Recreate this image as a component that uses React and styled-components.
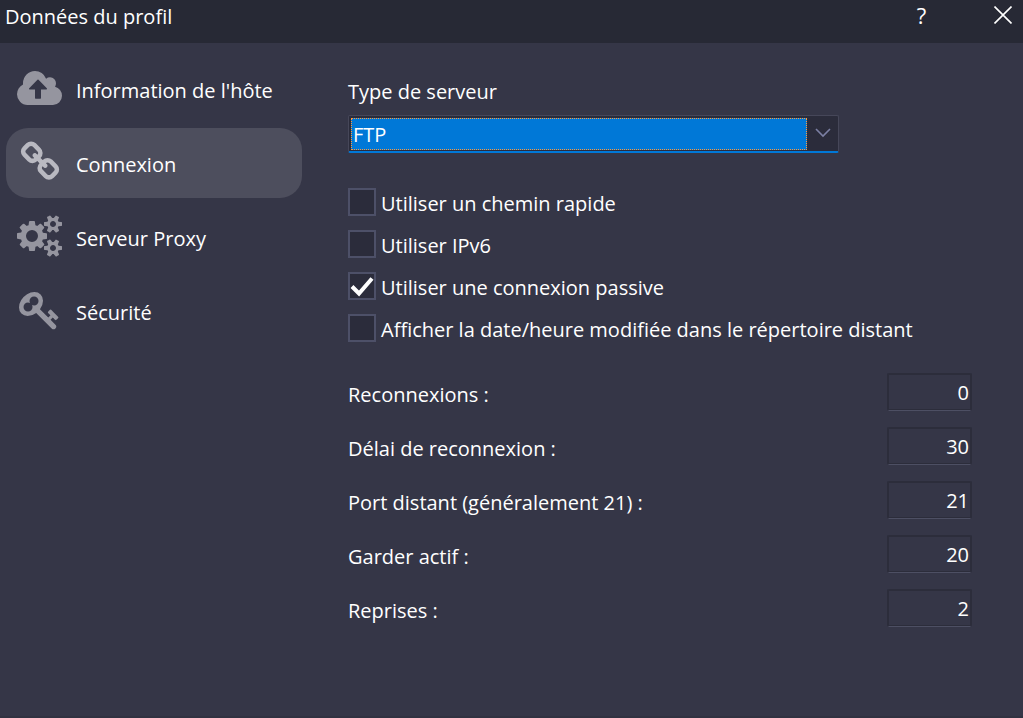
import React, { useState } from 'react';
import styled, { createGlobalStyle } from 'styled-components';

const GlobalStyle = createGlobalStyle`
  * {
    box-sizing: border-box;
  }

  body {
    margin: 0;
    background: #353647;
  }

  body, button, input, select {
    font-family: "Open Sans", "Noto Sans", sans-serif;
    font-size: 20px;
    line-height: 28px;
    color: #ffffff;
  }
`;

const Window = styled.div`
  min-height: 100vh;
  display: flex;
  flex-direction: column;
  background: #353647;
  border-bottom: 2px solid #313241;
`;

const TitleBar = styled.header`
  display: flex;
  justify-content: space-between;
  align-items: flex-start;
  height: 43px;
  padding-left: 5px;
  background: #272935;
`;

const Title = styled.h1`
  margin: 0;
  padding-top: 3px;
  font-size: 20px;
  font-weight: 400;
`;

const TitleButtons = styled.div`
  display: flex;
  gap: 40px;
`;

const TitleButton = styled.button`
  display: flex;
  justify-content: center;
  align-items: center;
  width: 41px;
  height: 29px;
  padding: 0;
  border: 0;
  background: none;
  font-size: 22px;
  font-weight: 500;
`;

const Body = styled.div`
  flex: 1;
  display: flex;
  gap: 46px;
  padding: 11px 51px 20px 6px;
`;

const Nav = styled.nav`
  flex: 0 0 296px;
  display: flex;
  flex-direction: column;
  gap: 4px;
`;

const NavItem = styled.a`
  display: flex;
  align-items: center;
  gap: 14px;
  height: 70px;
  padding-left: 11px;
  padding-bottom: 2px;
  border-radius: 22px;
  background: ${props => props.$active ? "#4d4e5d" : "none"};
  color: #ffffff;
  text-decoration: none;

  svg {
    fill: ${props => props.$active ? "#b9b9c1" : "#95959f"};
  }
`;

const NavIcon = styled.span`
  display: flex;
  width: 45px;
  height: 42px;
  align-items: center;
`;

const NavText = styled.span`
  padding-top: 5px;
`;

const Main = styled.main`
  flex: 1;
  display: flex;
  flex-direction: column;
  padding-top: 24px;
`;

const FieldLabel = styled.label`
  margin-bottom: 9px;
`;

const SelectFrame = styled.div`
  display: flex;
  max-width: 491px;
  height: 38px;
  padding: 2px 0 1px 2px;
  border: 1px solid #464759;
  border-bottom: 2px solid #0078d7;
  border-radius: 2px;
  background: #2b2c3b;
`;

const Select = styled.select`
  flex: 1;
  appearance: none;
  padding: 2px 1px 0;
  border: 1px dotted #ff9a3c;
  border-radius: 0;
  outline: none;
  background: #0078d7;
  line-height: 28px;
`;

const SelectArrow = styled.svg`
  width: 31px;
  height: 30px;
  fill: none;
  stroke: #7c80a4;
  stroke-width: 1.6;
`;

const CheckList = styled.div`
  display: flex;
  flex-direction: column;
  gap: 14px;
  margin-top: 35px;
`;

const CheckRow = styled.label`
  display: flex;
  gap: 5px;
  height: 28px;
`;

const CheckMark = styled.span`
  display: grid;
  width: 28px;
  height: 28px;

  > * {
    grid-area: 1 / 1;
  }
`;

const CheckInput = styled.input`
  appearance: none;
  width: 28px;
  height: 28px;
  margin: 0;
  border: 2px solid #4d5068;
  background: #2b2c3b;

  & + svg {
    visibility: hidden;
  }

  &:checked + svg {
    visibility: visible;
  }
`;

const CheckText = styled.span`
  padding-top: 2px;
`;

const NumberList = styled.div`
  display: flex;
  flex-direction: column;
  gap: 16px;
  margin-top: 31px;
`;

const NumberRow = styled.div`
  display: flex;
  justify-content: space-between;
  align-items: center;
  height: 38px;
`;

const NumberLabel = styled.label`
  padding-top: 5px;
`;

const NumberInput = styled.input`
  width: 85px;
  height: 38px;
  padding: 0 1px;
  border: 2px solid #2c2d3b;
  border-bottom: 1px solid #4d4f63;
  border-radius: 2px;
  outline: none;
  background: #353647;
  box-shadow: inset 0 -1px #2c2d3b;
  text-align: right;
`;

const CloudIcon = () => (
  <svg width="45" height="34" viewBox="0 128 1920 1408" preserveAspectRatio="none">
    <path d="M1280 864q0-14-9-23l-352-352q-9-9-23-9t-23 9l-351 351q-10 12-10 24 0 14 9 23t23 9h224v352q0 13 9.500 22.500t22.500 9.500h192q13 0 22.500-9.500t9.500-22.500v-352h224q13 0 22.500-9.500t9.500-22.500zm640 288q0 159-112.500 271.500t-271.500 112.500h-1088q-185 0-316.500-131.500t-131.500-316.500q0-130 70-240t188-165q-2-30-2-43 0-212 150-362t362-150q156 0 285.500 87t188.500 231q71-62 166-62 106 0 181 75t75 181q0 76-41 138 130 31 213.500 135.500t83.500 238.500z" />
  </svg>
);

const LinkIcon = () => (
  <svg width="45" height="42" viewBox="-86 0 1920 1792">
    <path d="M1520 1216q0-40-28-68l-208-208q-28-28-68-28-42 0-72 32 3 3 19 18.500t21.500 21.500 15 19 13 25.500 3.500 27.500q0 40-28 68t-68 28q-15 0-27.500-3.500t-25.500-13-19-15-21.500-21.500-18.500-19q-33 31-33 73 0 40 28 68l206 207q27 27 68 27 40 0 68-26l147-146q28-28 28-67zm-703-705q0-40-28-68l-206-207q-28-28-68-28-39 0-68 27l-147 146q-28 28-28 67 0 40 28 68l208 208q27 27 68 27 42 0 72-31-3-3-19-18.500t-21.500-21.500-15-19-13-25.500-3.500-27.500q0-40 28-68t68-28q15 0 27.500 3.500t25.500 13 19 15 21.500 21.500 18.500 19q33-31 33-73zm895 705q0 120-85 203l-147 146q-83 83-203 83-121 0-204-85l-206-207q-83-83-83-203 0-123 88-209l-88-88q-86 88-208 88-120 0-204-84l-208-208q-84-84-84-204t85-203l147-146q83-83 203-83 121 0 204 85l206 207q83 83 83 203 0 123-88 209l88 88q86-88 208-88 120 0 204 84l208 208q84 84 84 204z" />
  </svg>
);

const GearsIcon = () => (
  <svg width="45" height="42" viewBox="0 0 1920 1792">
    <path d="M896 896q0-106-75-181t-181-75-181 75-75 181 75 181 181 75 181-75 75-181zm768 512q0-52-38-90t-90-38-90 38-38 90q0 53 37.500 90.500t90.500 37.500 90.500-37.500 37.500-90.500zm0-1024q0-52-38-90t-90-38-90 38-38 90q0 53 37.500 90.500t90.500 37.500 90.500-37.500 37.500-90.500zm-384 421v185q0 10-7 19.500t-16 10.500l-155 24q-11 35-32 76 34 48 90 115 7 11 7 20 0 12-7 19-23 30-82.500 89.500t-78.500 59.500q-11 0-21-7l-115-90q-37 19-77 31-11 108-23 155-7 24-30 24h-186q-11 0-20-7.500t-10-17.500l-23-153q-34-10-75-31l-118 89q-7 7-20 7-11 0-21-8-144-133-144-160 0-9 7-19 10-14 41-53t47-61q-23-44-35-82l-152-24q-10-1-17-9.500t-7-19.500v-185q0-10 7-19.500t16-10.500l155-24q11-35 32-76-34-48-90-115-7-11-7-20 0-12 7-20 22-30 82-89t79-59q11 0 21 7l115 90q34-18 77-32 11-108 23-154 7-24 30-24h186q11 0 20 7.500t10 17.500l23 153q34 10 75 31l118-89q8-7 20-7 11 0 21 8 144 133 144 160 0 8-7 19-12 16-42 54t-45 60q23 48 34 82l152 23q10 2 17 10.500t7 19.500zm640 533v140q0 16-149 31-12 27-30 52 51 113 51 138 0 4-4 7-122 71-124 71-8 0-46-47t-52-68q-20 2-30 2t-30-2q-14 21-52 68t-46 47q-2 0-124-71-4-3-4-7 0-25 51-138-18-25-30-52-149-15-149-31v-140q0-16 149-31 13-29 30-52-51-113-51-138 0-4 4-7 4-2 35-20t59-34 30-16q8 0 46 46.500t52 67.500q20-2 30-2t30 2q51-71 92-112l6-2q4 0 124 70 4 3 4 7 0 25-51 138 17 23 30 52 149 15 149 31zm0-1024v140q0 16-149 31-12 27-30 52 51 113 51 138 0 4-4 7-122 71-124 71-8 0-46-47t-52-68q-20 2-30 2t-30-2q-14 21-52 68t-46 47q-2 0-124-71-4-3-4-7 0-25 51-138-18-25-30-52-149-15-149-31v-140q0-16 149-31 13-29 30-52-51-113-51-138 0-4 4-7 4-2 35-20t59-34 30-16q8 0 46 46.500t52 67.500q20-2 30-2t30 2q51-71 92-112l6-2q4 0 124 70 4 3 4 7 0 25-51 138 17 23 30 52 149 15 149 31z" />
  </svg>
);

const KeyIcon = () => (
  <svg width="45" height="42" viewBox="-86 0 1920 1792">
    <path d="M832 512q0-80-56-136t-136-56-136 56-56 136q0 42 19 83-41-19-83-19-80 0-136 56t-56 136 56 136 136 56 136-56 56-136q0-42-19-83 41 19 83 19 80 0 136-56t56-136zm851 704q0 17-49 66t-66 49q-9 0-28.500-16t-36.500-33-38.500-40-24.500-26l-96 96 220 220q28 28 28 68 0 42-39 81t-81 39q-40 0-68-28l-671-671q-176 131-365 131-163 0-265.500-102.500t-102.500-265.500q0-160 95-313t248-248 313-95q163 0 265.500 102.500t102.500 265.500q0 189-131 365l355 355 96-96q-3-3-26-24.500t-40-38.500-33-36.500-16-28.500q0-17 49-66t66-49q13 0 23 10 6 6 46 44.500t82 79.500 86.500 86 73 78 28.500 41z" />
  </svg>
);

const sections = [
  { id: 'hote', text: "Information de l'hôte", Icon: CloudIcon },
  { id: 'connexion', text: 'Connexion', Icon: LinkIcon },
  { id: 'proxy', text: 'Serveur Proxy', Icon: GearsIcon },
  { id: 'securite', text: 'Sécurité', Icon: KeyIcon },
];

const options = [
  { id: 'rapide', text: 'Utiliser un chemin rapide' },
  { id: 'ipv6', text: 'Utiliser IPv6' },
  { id: 'passive', text: 'Utiliser une connexion passive', checked: true },
  { id: 'date', text: 'Afficher la date/heure modifiée dans le répertoire distant' },
];

const numbers = [
  { id: 'reconnexions', text: 'Reconnexions :', value: '0' },
  { id: 'delai', text: 'Délai de reconnexion :', value: '30' },
  { id: 'port', text: 'Port distant (généralement 21) :', value: '21' },
  { id: 'actif', text: 'Garder actif :', value: '20' },
  { id: 'reprises', text: 'Reprises :', value: '2' },
];

function App() {
  const [active, setActive] = useState('connexion');

  return (
    <Window>
      <GlobalStyle />
      <TitleBar>
        <Title>Données du profil</Title>
        <TitleButtons>
          <TitleButton type="button">?</TitleButton>
          <TitleButton type="button" aria-label="Fermer">
            <svg width="18" height="18" viewBox="0 0 18 18" fill="none" stroke="#ffffff" strokeWidth="1.6">
              <path d="M.5 .5l17 17M17.500 .5l-17 17" />
            </svg>
          </TitleButton>
        </TitleButtons>
      </TitleBar>
      <Body>
        <Nav>
          {sections.map(({ id, text, Icon }) => (
            <NavItem key={id} href={`#${id}`} $active={id === active} onClick={() => setActive(id)}>
              <NavIcon><Icon /></NavIcon>
              <NavText>{text}</NavText>
            </NavItem>
          ))}
        </Nav>
        <Main>
          <FieldLabel htmlFor="type">Type de serveur</FieldLabel>
          <SelectFrame>
            <Select id="type" defaultValue="FTP">
              <option>FTP</option>
            </Select>
            <SelectArrow viewBox="0 0 31 30">
              <path d="M9 11l7 7 7-7" />
            </SelectArrow>
          </SelectFrame>
          <CheckList>
            {options.map(({ id, text, checked }) => (
              <CheckRow key={id}>
                <CheckMark>
                  <CheckInput type="checkbox" defaultChecked={checked} />
                  <svg width="28" height="28" fill="none" stroke="#ffffff" strokeWidth="4">
                    <path d="M4 14.500l7 7L24 6.500" />
                  </svg>
                </CheckMark>
                <CheckText>{text}</CheckText>
              </CheckRow>
            ))}
          </CheckList>
          <NumberList>
            {numbers.map(({ id, text, value }) => (
              <NumberRow key={id}>
                <NumberLabel htmlFor={id}>{text}</NumberLabel>
                <NumberInput id={id} type="text" inputMode="numeric" defaultValue={value} />
              </NumberRow>
            ))}
          </NumberList>
        </Main>
      </Body>
    </Window>
  );
}

export default App;
